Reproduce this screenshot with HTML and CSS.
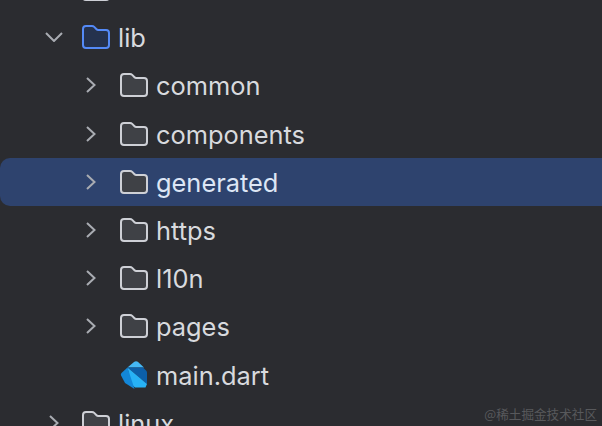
FILE: index.html
```html
<!DOCTYPE html>
<html lang="en">
<head>
  <meta charset="UTF-8" />
  <title>Project tree</title>
  <link rel="stylesheet" href="styles.css">
</head>
<body>
  <svg class="defs" width="0" height="0" aria-hidden="true">
    <symbol id="folder" viewBox="0 0 28 24">
      <path d="M1 4C1 2 2 1 4 1h6c1 0 1.600.3 2.200.9l2.300 2.300c.5.5 1 .7 1.700.7H24c2 0 3 1 3 3v12.100c0 2-1 3-3 3H4c-2 0-3-1-3-3z" />
    </symbol>
    <symbol id="open" viewBox="0 0 18 10">
      <path d="M1 1l8 8 8-8" />
    </symbol>
    <symbol id="closed" viewBox="0 0 10 16">
      <path d="M1 1l7.500 7L1 15" />
    </symbol>
  </svg>

  <ul class="tree">
    <li class="row level-1">
      <span class="twist"></span>
      <svg class="folder"><use href="#folder" /></svg>
      <span class="name">ios</span>
    </li>
    <li class="row level-1">
      <span class="twist"><svg class="arrow-open"><use href="#open" /></svg></span>
      <svg class="folder folder-blue"><use href="#folder" /></svg>
      <span class="name">lib</span>
    </li>
    <li class="row level-2">
      <span class="twist"><svg class="arrow"><use href="#closed" /></svg></span>
      <svg class="folder"><use href="#folder" /></svg>
      <span class="name">common</span>
    </li>
    <li class="row level-2">
      <span class="twist"><svg class="arrow"><use href="#closed" /></svg></span>
      <svg class="folder"><use href="#folder" /></svg>
      <span class="name">components</span>
    </li>
    <li class="row level-2 selected">
      <span class="twist"><svg class="arrow"><use href="#closed" /></svg></span>
      <svg class="folder"><use href="#folder" /></svg>
      <span class="name">generated</span>
    </li>
    <li class="row level-2">
      <span class="twist"><svg class="arrow"><use href="#closed" /></svg></span>
      <svg class="folder"><use href="#folder" /></svg>
      <span class="name">https</span>
    </li>
    <li class="row level-2">
      <span class="twist"><svg class="arrow"><use href="#closed" /></svg></span>
      <svg class="folder"><use href="#folder" /></svg>
      <span class="name">l10n</span>
    </li>
    <li class="row level-2">
      <span class="twist"><svg class="arrow"><use href="#closed" /></svg></span>
      <svg class="folder"><use href="#folder" /></svg>
      <span class="name">pages</span>
    </li>
    <li class="row level-2">
      <span class="twist"></span>
      <svg class="dart" viewBox="0 0 28 30">
        <path fill="#45b8f5" d="M7.500 7.500 14 2c1.200-1 2.600-1 3.800-.3L24 7.500z" />
        <path fill="#0c5fa9" d="M7.500 7.500H23l3 3c.8.8 1 1.500 1 2.500V24z" />
        <path fill="#27b2f6" d="M7.500 7.500 27 24l-1.500 3.500H15L11 24z" />
        <path fill="#1387d8" d="M7.500 7.500 1.500 13c-.8.800-.8 1.800-.3 2.800L5 23l9.500 6z" />
      </svg>
      <span class="name">main.dart</span>
    </li>
    <li class="row level-1">
      <span class="twist"><svg class="arrow"><use href="#closed" /></svg></span>
      <svg class="folder"><use href="#folder" /></svg>
      <span class="name">linux</span>
    </li>
  </ul>

  <div class="watermark">@稀土掘金技术社区</div>
</body>
</html>
```
FILE: styles.css
```css
html, body {
  margin: 0;
  padding: 0;
  height: 100%;
}
body {
  background: #2b2c30;
  color: #d8dade;
  font-family: 'Inter', 'Liberation Sans', sans-serif;
  overflow: hidden;
  position: relative;
}
.defs {
  position: absolute;
}
.tree {
  list-style: none;
  margin: -35px 0 0;
  padding: 0;
}
.row {
  display: flex;
  align-items: center;
  height: 48.2px;
  font-size: 25.4px;
  font-weight: 400;
  white-space: nowrap;
}
.level-1 {
  padding-left: 41px;
}
.level-2 {
  padding-left: 78px;
}
.selected {
  background: #2e436e;
  border-radius: 10px 0 0 10px;
  color: #dde6f5;
}
.twist {
  width: 26px;
  height: 26px;
  margin-right: 16px;
  display: flex;
  align-items: center;
  justify-content: center;
  flex: none;
}
.level-1 .twist {
  margin-right: 15px;
}
.arrow {
  width: 10px;
  height: 16px;
  fill: none;
  stroke: #a9acb2;
  stroke-width: 2;
}
.arrow-open {
  width: 18px;
  height: 10px;
  fill: none;
  stroke: #a9acb2;
  stroke-width: 2;
}
.folder {
  width: 28px;
  height: 24px;
  flex: none;
  fill: #3f4146;
  stroke: #ced0d6;
  stroke-width: 2;
}
.folder-blue {
  fill: #25324d;
  stroke: #548af7;
}
.dart {
  width: 28px;
  height: 30px;
  flex: none;
}
.name {
  margin-left: 8px;
  padding-top: 1px;
}
.watermark {
  position: absolute;
  right: 5px;
  bottom: 3px;
  font-family: 'Noto Sans CJK SC', sans-serif;
  font-size: 12.6px;
  color: #58595c;
}
```
